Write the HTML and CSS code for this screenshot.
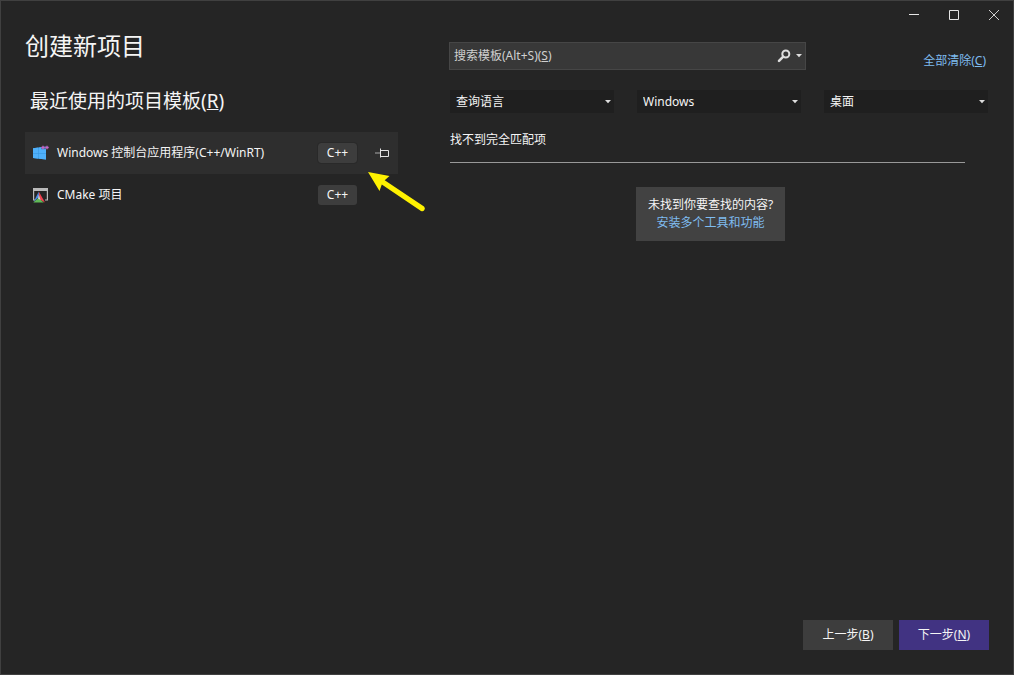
FILE: index.html
```html
<!DOCTYPE html>
<html lang="zh-CN">
<head>
<meta charset="utf-8">
<meta name="viewport" content="width=device-width, initial-scale=1">
<title>创建新项目</title>
<link rel="stylesheet" href="styles.css">
</head>
<body>
<div class="window">
  <header class="caption">
    <button class="caption-btn" aria-label="最小化"><svg width="12" height="12" viewBox="0 0 12 12"><path d="M1 5.500h10" stroke="#e6e6e6"/></svg></button>
    <button class="caption-btn" aria-label="最大化"><svg width="12" height="12" viewBox="0 0 12 12"><path d="M1.500 1.500h9v9h-9z" fill="none" stroke="#e6e6e6"/></svg></button>
    <button class="caption-btn" aria-label="关闭"><svg width="12" height="12" viewBox="0 0 12 12"><path d="M1 1l10 10M11 1L1 11" stroke="#d0d0d0"/></svg></button>
  </header>
  <main class="content">
    <section class="recent">
      <h1 class="title">创建新项目</h1>
      <h2 class="subtitle">最近使用的项目模板(<u>R</u>)</h2>
      <ul class="templates">
        <li class="template selected">
          <svg class="template-icon" width="16" height="16" viewBox="0 0 16 16"><path d="M0 3.200l13-1.700V14.500L0 13z" fill="#3493dc"/><path d="M0 3.200l5.500-.8V8H0zM6 2.400l7-.9V8H6zM0 8.500h5.500v5.200L0 13zM6 8.500h7v6l-7-.8z" fill="#4fb0fa"/><path d="M8.200 0H16v4.200H8.200z" fill="#2e2e2e" fill-opacity=".45"/><path d="M8.300 2.500h3.400M10 .8v3.400M12.300 2.500h3.400M14 .8v3.400" stroke="#c466c8" stroke-width="1.300"/></svg>
          <span class="template-name">Windows 控制台应用程序(C++/WinRT)</span>
          <span class="tag">C++</span>
          <button class="pin" aria-label="固定"><svg width="16" height="12" viewBox="0 0 16 12"><path d="M1 6h5" stroke="#a8a8a8"/><path d="M6.500 1.500v9M6.500 3.500h8v6h-8" fill="none" stroke="#e4e4e4"/></svg></button>
        </li>
        <li class="template">
          <svg class="template-icon" width="16" height="16" viewBox="0 0 16 16"><path d="M0 1h15v3H0z" fill="#b9b9b9"/><path d="M.6 3v10h1.500M14.400 3v10H12" fill="none" stroke="#b9b9b9" stroke-width="1.200"/><path d="M5.800 4.500L.6 15l5.200-5z" fill="#4b8ae8"/><path d="M5.800 4.500L12 15.500 6.500 12.500z" fill="#f0414f"/><path d="M.3 15.500l5-4.500 5.500 4.500z" fill="#61b958"/><path d="M5.800 7.500L5 11.500l2.500 1.500z" fill="#d8d8d8"/></svg>
          <span class="template-name">CMake 项目</span>
          <span class="tag">C++</span>
        </li>
      </ul>
    </section>
    <section class="results">
      <div class="search-row">
        <div class="search">
          <input class="search-input" id="search" type="text" accesskey="s">
          <label class="search-label" for="search">搜索模板(Alt+S)(<u>S</u>)</label>
          <button class="search-btn" aria-label="搜索"><svg width="14" height="14" viewBox="0 0 14 14"><circle cx="8.800" cy="5" r="3.500" fill="none" stroke="#dedede" stroke-width="2"/><path d="M6.200 7.600L2 11.800" stroke="#dedede" stroke-width="2.600" stroke-linecap="round"/></svg><svg width="6" height="4" viewBox="0 0 6 4"><path d="M0 0h6L3 3.300z" fill="#dedede"/></svg></button>
        </div>
        <a class="link clear" href="#">全部清除(<u>C</u>)</a>
      </div>
      <div class="filters">
        <div class="filter"><select class="filter-select" aria-label="语言"><option>查询语言</option></select><svg class="filter-arrow" width="6" height="4" viewBox="0 0 6 4"><path d="M0 0h6L3 3.300z" fill="#dedede"/></svg></div>
        <div class="filter"><select class="filter-select" aria-label="平台"><option>Windows</option></select><svg class="filter-arrow" width="6" height="4" viewBox="0 0 6 4"><path d="M0 0h6L3 3.300z" fill="#dedede"/></svg></div>
        <div class="filter"><select class="filter-select" aria-label="项目类型"><option>桌面</option></select><svg class="filter-arrow" width="6" height="4" viewBox="0 0 6 4"><path d="M0 0h6L3 3.300z" fill="#dedede"/></svg></div>
      </div>
      <p class="no-match">找不到完全匹配项</p>
      <div class="more">
        <p class="more-text">未找到你要查找的内容?</p>
        <a class="link" href="#">安装多个工具和功能</a>
      </div>
    </section>
  </main>
  <footer class="actions">
    <button class="btn">上一步(<u>B</u>)</button>
    <button class="btn primary">下一步(<u>N</u>)</button>
  </footer>
  <svg class="pointer" width="60" height="44" viewBox="0 0 60 44"><path d="M2 2l21.500 4-4.800 4.200L58 36.500a2.700 2.700 0 0 1-3 4.400L15.800 14.500 13.500 21z" fill="#fff200"/></svg>
</div>
</body>
</html>
```

FILE: styles.css
```css
* { box-sizing: border-box; margin: 0; padding: 0; }
body, button, input, select {
  font-family: "Noto Sans", "Noto Sans CJK SC", sans-serif;
  font-size: 12px;
  line-height: 18px;
  color: #f5f5f5;
}
body { background: #252525; }
button { border: 0; background: none; }
u { text-underline-offset: 1px; }
.window {
  position: relative;
  display: flex;
  flex-direction: column;
  min-height: 100vh;
  border: 1px solid #404040;
}
.caption { display: flex; justify-content: flex-end; height: 28px; margin-right: -1px; }
.caption-btn { display: flex; align-items: center; justify-content: center; width: 40px; }
.content {
  flex: 1;
  display: grid;
  grid-template-columns: minmax(0, 373fr) minmax(0, 540fr);
  gap: 51px;
  padding: 0 24px;
}
.title { font-size: 24px; line-height: 34px; font-weight: 400; }
.subtitle { padding: 24px 5px 0; font-size: 19px; line-height: 28px; font-weight: 400; }
.templates { list-style: none; margin-top: 17px; }
.template { display: flex; align-items: center; height: 42px; padding: 0 8px; }
.selected { background: #2e2e2e; }
.template-icon { margin-right: 8px; }
.template-name { flex: 1; }
.tag {
  width: 39px;
  margin-right: 33px;
  border-radius: 3px;
  background: #3d3d3d;
  line-height: 20px;
  text-align: center;
}
.selected .tag { margin-right: 17px; outline: 1px solid #292929; }
.pin { display: flex; width: 16px; }
.results { padding-top: 13px; }
.search-row { display: flex; justify-content: space-between; align-items: center; }
.search {
  display: grid;
  grid-template-columns: 1fr 28px;
  align-items: center;
  width: 66.2%;
  height: 28px;
  border: 1px solid #464646;
  background: #383838;
}
.search-input { grid-area: 1 / 1 / 2 / 3; height: 100%; padding: 0 36px 0 4px; border: 0; outline: 0; background: none; }
.search-label { grid-area: 1 / 1; padding-left: 4px; color: #d0d0d0; cursor: text; }
.search-input:focus + .search-label { visibility: hidden; }
.search-btn { grid-area: 1 / 2; display: flex; align-items: center; gap: 5px; }
.link { color: #7fbcf0; text-decoration: none; }
.clear { padding: 10px 3px 0 0; }
.filters { display: grid; grid-template-columns: repeat(3, 1fr); gap: 23px; margin: 20px 1px 0; }
.filter { display: grid; align-items: center; }
.filter-select {
  grid-area: 1 / 1;
  appearance: none;
  width: 100%;
  height: 23px;
  padding: 0 20px 0 6px;
  border: 0;
  background: #1f1f1f;
}
.filter-arrow { grid-area: 1 / 1; justify-self: end; margin-right: 3px; pointer-events: none; }
.no-match { margin: 18px 24px 0 1px; padding-bottom: 13px; border-bottom: 1px solid #999; }
.more { width: fit-content; margin: 24px 0 0 calc(50% - 83px); padding: 9px 12px; background: #424242; text-align: center; }
.actions { display: flex; justify-content: flex-end; gap: 6px; padding: 0 24px 24px; }
.btn { width: 90px; height: 30px; background: #3d3d3d; }
.primary { background: #413382; }
.pointer { position: absolute; left: 365px; top: 169px; }
```
